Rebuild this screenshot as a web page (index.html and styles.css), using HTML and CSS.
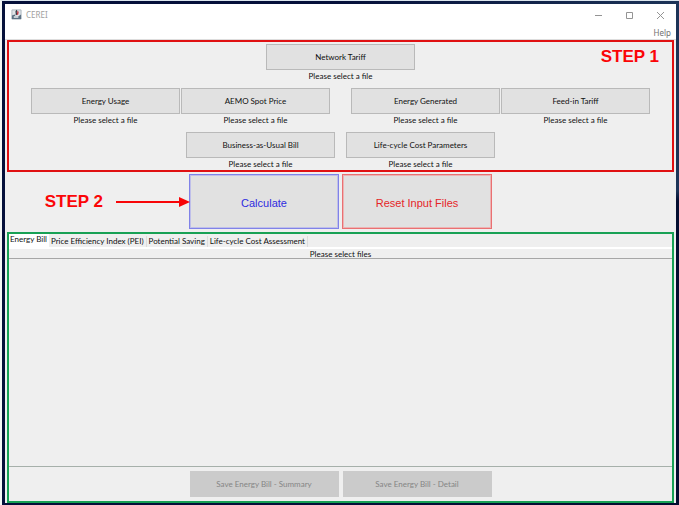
FILE: index.html
```html
<!DOCTYPE html>
<html lang="en">
<head>
<meta charset="utf-8">
<title>CEREI</title>
<link rel="stylesheet" href="styles.css">
</head>
<body>
<div class="desktop">
  <div class="window">
    <header class="titlebar">
      <svg class="app-icon" viewBox="0 0 12 12" aria-hidden="true">
        <path d="M1 1h10v10H1z" fill="#dfe4e8" stroke="#a9b3bd"/>
        <path d="M1 7l3-1 1 2 3 0 3-2v5H1z" fill="#5d7183"/>
        <path d="M3 8h5v1.500H3z" fill="#f4f6f8"/>
        <path d="M6.500 1.500C4 3.500 7 4 5.500 6.500" fill="none" stroke="#33353f" stroke-width="1.500"/>
        <path d="M7 2.500c1.800 1.200-.5 2.200.3 3.800" fill="none" stroke="#c33644" stroke-width="1.600"/>
      </svg>
      <span class="app-name">CEREI</span>
      <div class="window-controls">
        <button class="control" aria-label="Minimize"><svg viewBox="0 0 8 8"><path d="M0 4.500h7"/></svg></button>
        <button class="control" aria-label="Maximize"><svg viewBox="0 0 8 8"><path d="M.5 1.500h6v6h-6z"/></svg></button>
        <button class="control" aria-label="Close"><svg viewBox="0 0 8 8"><path d="M0 1l7 7M7 1l-7 7"/></svg></button>
      </div>
    </header>
    <nav class="menubar"><button class="menu">Help</button></nav>

    <main class="content">
      <section class="inputs">
        <strong class="step step-one">STEP 1</strong>
        <div class="row">
          <div class="field"><button class="file" aria-describedby="s1">Network Tariff</button><span class="status" id="s1">Please select a file</span></div>
        </div>
        <div class="row row-wide">
          <div class="pair">
            <div class="field"><button class="file" aria-describedby="s2">Energy Usage</button><span class="status" id="s2">Please select a file</span></div>
            <div class="field"><button class="file" aria-describedby="s3">AEMO Spot Price</button><span class="status" id="s3">Please select a file</span></div>
          </div>
          <div class="pair">
            <div class="field"><button class="file" aria-describedby="s4">Energy Generated</button><span class="status" id="s4">Please select a file</span></div>
            <div class="field"><button class="file" aria-describedby="s5">Feed-in Tariff</button><span class="status" id="s5">Please select a file</span></div>
          </div>
        </div>
        <div class="row row-mid">
          <div class="field"><button class="file" aria-describedby="s6">Business-as-Usual Bill</button><span class="status" id="s6">Please select a file</span></div>
          <div class="field"><button class="file" aria-describedby="s7">Life-cycle Cost Parameters</button><span class="status" id="s7">Please select a file</span></div>
        </div>
      </section>

      <section class="actions">
        <div class="hint">
          <strong class="step">STEP 2</strong>
          <svg class="arrow" viewBox="0 0 74 12" aria-hidden="true"><path d="M0 5h65v2H0z"/><path d="M63 1l11 5-11 5z"/></svg>
        </div>
        <div class="action-buttons">
          <button class="action calculate">Calculate</button>
          <button class="action reset">Reset Input Files</button>
        </div>
      </section>

      <section class="results">
        <div class="tabs" role="tablist">
          <button class="tab selected" role="tab" aria-selected="true">Energy Bill</button>
          <button class="tab" role="tab" aria-selected="false">Price Efficiency Index (PEI)</button>
          <button class="tab" role="tab" aria-selected="false">Potential Saving</button>
          <button class="tab" role="tab" aria-selected="false">Life-cycle Cost Assessment</button>
        </div>
        <div class="message">Please select files</div>
        <div class="view"></div>
        <footer class="save">
          <button class="file" disabled>Save Energy Bill - Summary</button>
          <button class="file" disabled>Save Energy Bill - Detail</button>
        </footer>
      </section>
    </main>
  </div>
</div>
</body>
</html>
```
FILE: styles.css
```css
* { box-sizing: border-box; }

body {
  margin: 0;
  background: #dce6ee;
  color: #101010;
  font: 8px/10px Lato, "Open Sans", sans-serif;
}

button { margin: 0; padding: 0; border: 0; background: none; color: inherit; font: inherit; }

.desktop {
  display: flex;
  min-height: 100vh;
  padding: 3px 3px 2px;
  border-top: 1px solid #dce6ee;
  border-left: 2px solid #f4f7f4;
  background: linear-gradient(to right, #05103a 0, #05103a 50%, transparent 100%), linear-gradient(#1c3357 0, #1c3357 190px, #030d30 200px);
}

.window { display: flex; flex: 1; flex-direction: column; background: #fff; }

.titlebar { display: flex; align-items: center; height: 21px; padding-left: 6px; }
.app-icon { width: 11px; height: 11px; }
.app-name { margin-left: 4px; color: #a0a0a0; font-family: "Noto Sans", sans-serif; }
.window-controls { display: flex; margin-left: auto; }
.control { display: flex; align-items: center; justify-content: center; width: 31px; height: 21px; }
.control svg { width: 8px; height: 8px; fill: none; stroke: #949494; }

.menubar { display: flex; justify-content: flex-end; height: 15px; padding-right: 5px; border-bottom: 1px solid #ddd; }
.menu { height: 15px; color: #707070; font-family: "Noto Sans", sans-serif; }

.content { display: flex; flex: 1; flex-direction: column; padding: 0 2px; background: #efefef; }

.inputs {
  position: relative;
  display: flex;
  flex-direction: column;
  gap: 6px;
  padding: 2px 0 0;
  border: 2px solid #e01012;
}
.step { color: #fb0507; font: bold 17px/20px "Liberation Sans", Arial, sans-serif; }
.step-one { position: absolute; top: 5px; right: 13px; }
.row { display: flex; justify-content: center; }
.row-wide { gap: 21px; }
.row-mid { gap: 11px; }
.pair { display: flex; gap: 1px; }
.field { display: flex; flex-direction: column; align-items: center; }
.status { height: 12px; line-height: 12px; }

.file { width: 149px; height: 26px; border: 1px solid #b9b9b9; background: #e1e1e1; }
.file:disabled { border-color: #cbcbcb; background: #cbcbcb; color: #858585; }

.actions { display: grid; grid-template-columns: 1fr auto 1fr; align-items: center; padding: 2px 0 3px; }
.hint { position: relative; display: flex; align-items: center; justify-content: flex-end; gap: 13px; margin-right: -1px; }
.arrow { width: 74px; height: 12px; fill: #f80508; }
.action-buttons { display: flex; gap: 3px; }
.action { width: 150px; height: 55px; padding-top: 2px; background: #e1e1e1; font: 11px/16px "Liberation Sans", Arial, sans-serif; }
.calculate { border: 1px solid #8082e8; color: #2f2be0; box-shadow: inset 0 0 0 1px #bfbfea; }
.reset { border: 1px solid #ea7072; color: #e52528; box-shadow: inset 0 0 0 1px #ecb4b4; }

.results { display: flex; flex: 1; flex-direction: column; border: 2px solid #18a155; }
.tabs { display: flex; align-items: flex-end; height: 15px; border-bottom: 2px solid #fff; }
.tab { height: 11px; padding: 0 2px; border-right: 1px solid #dcdcdc; line-height: 11px; }
.tab.selected { height: 13px; padding: 0 2px 2px 1px; border: 0; background: #fff; }
.message { height: 10px; border-bottom: 1px solid #a6a6a6; line-height: 10px; text-align: center; }
.view { flex: 1; }
.save { display: flex; justify-content: center; gap: 4px; padding: 4px 0; border-top: 1px solid #a6b0aa; }
```
